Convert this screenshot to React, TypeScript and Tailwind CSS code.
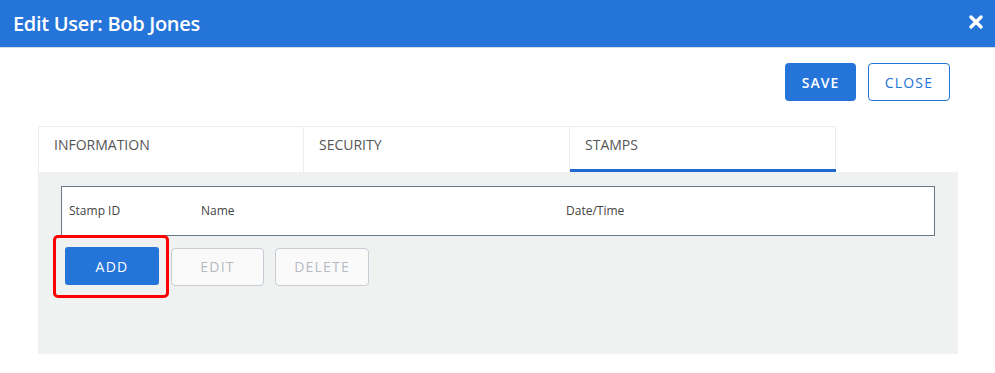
import React from "react";

export default function App() {
  return (
    <div className="w-[995px] h-[373px] bg-white overflow-hidden" style={{ fontFamily: '"Open Sans", sans-serif' }}>
      <div className="h-[48px] bg-[#2574d9] border-b border-[#d6dde6] flex items-center justify-between pl-[13px] pr-[12px]">
        <div className="text-white text-[20px] font-semibold tracking-[-0.3px]">Edit User: Bob Jones</div>
        <svg width="14" height="14" viewBox="0 0 14 14" className="mt-[-3px]">
          <path d="M2 2 L12 12 M12 2 L2 12" stroke="white" strokeWidth="3.4" strokeLinecap="round" />
        </svg>
      </div>
      <div className="flex justify-end gap-[12px] pr-[45px] pt-[15px]">
        <button className="w-[71px] h-[38px] rounded-[4px] bg-[#2574d9] text-white text-[14px] font-semibold tracking-[1px]">SAVE</button>
        <button className="w-[82px] h-[38px] rounded-[4px] border border-[#2574d9] bg-white text-[#2574d9] text-[14px] tracking-[1.2px]">CLOSE</button>
      </div>
      <div className="ml-[38px] w-[920px] mt-[25px]">
        <div className="flex h-[46px]">
          {["INFORMATION", "SECURITY", "STAMPS"].map((t, i) => (
            <div
              key={t}
              className={`w-[266px] border-t border-r border-[#eceeee] ${i === 0 ? "border-l" : ""} bg-white relative pl-[15px] pt-[7px] text-[14px] text-[#555] font-medium`}
            >
              {t}
              {i === 2 && <div className="absolute left-0 right-[-1px] bottom-0 h-[3px] bg-[#2069d3]" />}
            </div>
          ))}
        </div>
        <div className="bg-[#f0f1f1] h-[182px] pt-[14px] px-[23px]">
          <div className="h-[50px] bg-white border border-[#6b7785] flex items-center text-[12px] text-[#444] w-[874px]">
            <div className="w-[139px] pl-[7px]">Stamp ID</div>
            <div className="w-[365px]">Name</div>
            <div>Date/Time</div>
          </div>
          <div className="flex items-center mt-[-1px] ml-[-8px]">
            <div className="border-[3px] border-[#ff0000] rounded-[5px] p-[9px] w-[116px] h-[63px]">
              <button className="w-[94px] h-[38px] rounded-[3px] bg-[#2574d9] text-white text-[14px] font-medium tracking-[1.2px]">ADD</button>
            </div>
            <button className="ml-[2px] w-[93px] h-[38px] rounded-[4px] border border-[#c8cdd5] bg-[#fafafa] text-[#b5bac3] text-[14px] tracking-[1.2px]">EDIT</button>
            <button className="ml-[11px] w-[94px] h-[38px] rounded-[4px] border border-[#c8cdd5] bg-[#fafafa] text-[#b5bac3] text-[14px] tracking-[1.2px]">DELETE</button>
          </div>
        </div>
      </div>
    </div>
  );
}
